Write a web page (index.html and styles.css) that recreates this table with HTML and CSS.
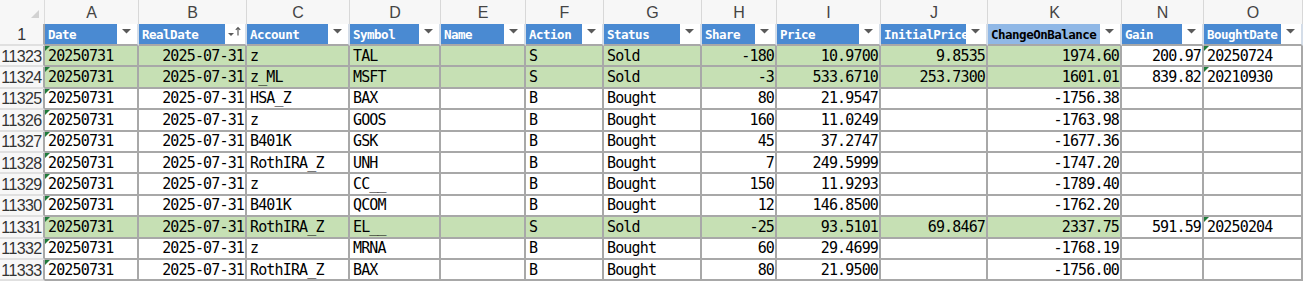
FILE: index.html
```html
<!DOCTYPE html>
<html>
<head>
<meta charset="utf-8">
<link rel="stylesheet" href="styles.css">
</head>
<body>
<div class="sheet">
  <div class="row">
    <div class="corner"></div>
    <div class="col">A</div><div class="col">B</div><div class="col">C</div><div class="col">D</div><div class="col">E</div><div class="col">F</div><div class="col">G</div><div class="col">H</div><div class="col">I</div><div class="col">J</div><div class="col">K</div><div class="col">N</div><div class="col">O</div>
  </div>
  <div class="row">
    <div class="rn">1</div>
    <div class="h">Date<span class="fb"><svg width="20" height="20" viewBox="0 0 20 20"><polygon points="5,5 14,5 9.5,9.5" fill="#5a5a5a"/></svg></span></div>
    <div class="h">RealDate<span class="fb"><svg width="20" height="20" viewBox="0 0 20 20"><polygon points="3,9 9,9 6,12" fill="#5a5a5a"/><path d="M13 11.5V3.5M10.8 5.8L13 3.5L15.2 5.8" stroke="#5a5a5a" stroke-width="1.2" fill="none"/></svg></span></div>
    <div class="h">Account<span class="fb"><svg width="20" height="20" viewBox="0 0 20 20"><polygon points="5,5 14,5 9.5,9.5" fill="#5a5a5a"/></svg></span></div>
    <div class="h">Symbol<span class="fb"><svg width="20" height="20" viewBox="0 0 20 20"><polygon points="5,5 14,5 9.5,9.5" fill="#5a5a5a"/></svg></span></div>
    <div class="h">Name<span class="fb"><svg width="20" height="20" viewBox="0 0 20 20"><polygon points="5,5 14,5 9.5,9.5" fill="#5a5a5a"/></svg></span></div>
    <div class="h">Action<span class="fb"><svg width="20" height="20" viewBox="0 0 20 20"><polygon points="5,5 14,5 9.5,9.5" fill="#5a5a5a"/></svg></span></div>
    <div class="h">Status<span class="fb"><svg width="20" height="20" viewBox="0 0 20 20"><polygon points="5,5 14,5 9.5,9.5" fill="#5a5a5a"/></svg></span></div>
    <div class="h">Share<span class="fb"><svg width="20" height="20" viewBox="0 0 20 20"><polygon points="5,5 14,5 9.5,9.5" fill="#5a5a5a"/></svg></span></div>
    <div class="h">Price<span class="fb"><svg width="20" height="20" viewBox="0 0 20 20"><polygon points="5,5 14,5 9.5,9.5" fill="#5a5a5a"/></svg></span></div>
    <div class="h">InitialPrice<span class="fb"><svg width="20" height="20" viewBox="0 0 20 20"><polygon points="5,5 14,5 9.5,9.5" fill="#5a5a5a"/></svg></span></div>
    <div class="h sel">ChangeOnBalance<span class="fb"><svg width="20" height="20" viewBox="0 0 20 20"><polygon points="5,5 14,5 9.5,9.5" fill="#5a5a5a"/></svg></span></div>
    <div class="h">Gain<span class="fb"><svg width="20" height="20" viewBox="0 0 20 20"><polygon points="5,5 14,5 9.5,9.5" fill="#5a5a5a"/></svg></span></div>
    <div class="h">BoughtDate<span class="fb"><svg width="20" height="20" viewBox="0 0 20 20"><polygon points="5,5 14,5 9.5,9.5" fill="#5a5a5a"/></svg></span></div>
  </div>

  <div class="row">
    <div class="rn">11323</div>
    <div class="c g err">20250731</div><div class="c g num">2025-07-31</div><div class="c g">z</div><div class="c g">TAL</div><div class="c g"></div><div class="c g">S</div><div class="c g">Sold</div><div class="c g num">-180</div><div class="c g num">10.9700</div><div class="c g num">9.8535</div><div class="c g num">1974.60</div><div class="c num">200.97</div><div class="c err">20250724</div>
  </div>
  <div class="row">
    <div class="rn">11324</div>
    <div class="c g err">20250731</div><div class="c g num">2025-07-31</div><div class="c g">z_ML</div><div class="c g">MSFT</div><div class="c g"></div><div class="c g">S</div><div class="c g">Sold</div><div class="c g num">-3</div><div class="c g num">533.6710</div><div class="c g num">253.7300</div><div class="c g num">1601.01</div><div class="c num">839.82</div><div class="c err">20210930</div>
  </div>
  <div class="row">
    <div class="rn">11325</div>
    <div class="c err">20250731</div><div class="c num">2025-07-31</div><div class="c">HSA_Z</div><div class="c">BAX</div><div class="c"></div><div class="c">B</div><div class="c">Bought</div><div class="c num">80</div><div class="c num">21.9547</div><div class="c num"></div><div class="c num">-1756.38</div><div class="c num"></div><div class="c"></div>
  </div>
  <div class="row">
    <div class="rn">11326</div>
    <div class="c err">20250731</div><div class="c num">2025-07-31</div><div class="c">z</div><div class="c">GOOS</div><div class="c"></div><div class="c">B</div><div class="c">Bought</div><div class="c num">160</div><div class="c num">11.0249</div><div class="c num"></div><div class="c num">-1763.98</div><div class="c num"></div><div class="c"></div>
  </div>
  <div class="row">
    <div class="rn">11327</div>
    <div class="c err">20250731</div><div class="c num">2025-07-31</div><div class="c">B401K</div><div class="c">GSK</div><div class="c"></div><div class="c">B</div><div class="c">Bought</div><div class="c num">45</div><div class="c num">37.2747</div><div class="c num"></div><div class="c num">-1677.36</div><div class="c num"></div><div class="c"></div>
  </div>
  <div class="row">
    <div class="rn">11328</div>
    <div class="c err">20250731</div><div class="c num">2025-07-31</div><div class="c">RothIRA_Z</div><div class="c">UNH</div><div class="c"></div><div class="c">B</div><div class="c">Bought</div><div class="c num">7</div><div class="c num">249.5999</div><div class="c num"></div><div class="c num">-1747.20</div><div class="c num"></div><div class="c"></div>
  </div>
  <div class="row">
    <div class="rn">11329</div>
    <div class="c err">20250731</div><div class="c num">2025-07-31</div><div class="c">z</div><div class="c">CC__</div><div class="c"></div><div class="c">B</div><div class="c">Bought</div><div class="c num">150</div><div class="c num">11.9293</div><div class="c num"></div><div class="c num">-1789.40</div><div class="c num"></div><div class="c"></div>
  </div>
  <div class="row">
    <div class="rn">11330</div>
    <div class="c err">20250731</div><div class="c num">2025-07-31</div><div class="c">B401K</div><div class="c">QCOM</div><div class="c"></div><div class="c">B</div><div class="c">Bought</div><div class="c num">12</div><div class="c num">146.8500</div><div class="c num"></div><div class="c num">-1762.20</div><div class="c num"></div><div class="c"></div>
  </div>
  <div class="row">
    <div class="rn">11331</div>
    <div class="c g err">20250731</div><div class="c g num">2025-07-31</div><div class="c g">RothIRA_Z</div><div class="c g">EL__</div><div class="c g"></div><div class="c g">S</div><div class="c g">Sold</div><div class="c g num">-25</div><div class="c g num">93.5101</div><div class="c g num">69.8467</div><div class="c g num">2337.75</div><div class="c num">591.59</div><div class="c err">20250204</div>
  </div>
  <div class="row">
    <div class="rn">11332</div>
    <div class="c err">20250731</div><div class="c num">2025-07-31</div><div class="c">z</div><div class="c">MRNA</div><div class="c"></div><div class="c">B</div><div class="c">Bought</div><div class="c num">60</div><div class="c num">29.4699</div><div class="c num"></div><div class="c num">-1768.19</div><div class="c num"></div><div class="c"></div>
  </div>
  <div class="row">
    <div class="rn">11333</div>
    <div class="c err">20250731</div><div class="c num">2025-07-31</div><div class="c">RothIRA_Z</div><div class="c">BAX</div><div class="c"></div><div class="c">B</div><div class="c">Bought</div><div class="c num">80</div><div class="c num">21.9500</div><div class="c num"></div><div class="c num">-1756.00</div><div class="c num"></div><div class="c"></div>
  </div>
</div>
</body>
</html>
```
FILE: styles.css
```css
html, body {
  margin: 0;
  padding: 0;
  background: #ffffff;
  overflow: hidden;
}

.sheet {
  display: grid;
  grid-template-columns: 45px 94px 108px 103px 91px 85px 78px 98px 75px 104px 107px 134px 82px 99px;
  grid-template-rows: 24px 22px repeat(11, 21.4px);
  width: 1303px;
}

.row {
  display: contents;
}

.corner {
  background: #f7f7f7;
  border-right: 1px solid #dcdcdc;
  position: relative;
}

.corner::after {
  content: "";
  position: absolute;
  right: 5px;
  bottom: 6px;
  border-bottom: 8px solid #d2d2d2;
  border-left: 8px solid transparent;
}

.col {
  background: #f7f7f7;
  border-right: 1px solid #d8d8d8;
  color: #444444;
  font: 16px "Liberation Sans", Arial, sans-serif;
  display: flex;
  align-items: center;
  justify-content: center;
  padding-top: 1px;
  box-sizing: border-box;
}

.rn {
  background: #f7f7f7;
  border-right: 2px solid #a8a8a8;
  border-bottom: 2px solid #e0e0e0;
  color: #333333;
  font: 16px "Liberation Sans", Arial, sans-serif;
  letter-spacing: -0.6px;
  display: flex;
  align-items: center;
  justify-content: center;
  box-sizing: border-box;
  white-space: nowrap;
  overflow: hidden;
  padding-top: 2px;
}

.h {
  position: relative;
  background: #4a8ad2;
  color: #ffffff;
  font: bold 12.5px "DejaVu Sans Mono", monospace;
  letter-spacing: -0.5px;
  border-right: 2px solid #d4dde8;
  border-bottom: 2px solid #a8a8a8;
  box-sizing: border-box;
  padding-left: 3px;
  display: flex;
  align-items: center;
  white-space: nowrap;
  overflow: hidden;
}

.h.sel {
  background: #90b8e6;
  color: #000000;
}

.fb {
  position: absolute;
  right: 0;
  top: 0;
  bottom: 0;
  width: 20px;
  background: #ffffff;
}

.fb svg {
  display: block;
}

.c {
  position: relative;
  background: #ffffff;
  color: #000000;
  font: 15px/17px "DejaVu Sans Mono", monospace;
  letter-spacing: -0.85px;
  border-right: 2px solid #a8a8a8;
  border-bottom: 2px solid #a8a8a8;
  box-sizing: border-box;
  padding: 1px 2px 0 3px;
  display: flex;
  align-items: center;
  white-space: nowrap;
}

.c.num {
  justify-content: flex-end;
  padding-right: 1px;
}

.c.g {
  background: #c6e0b4;
}

.c.err::before {
  content: "";
  position: absolute;
  left: 0;
  top: 0;
  border-top: 5px solid #1f7a3a;
  border-right: 5px solid transparent;
}
```
